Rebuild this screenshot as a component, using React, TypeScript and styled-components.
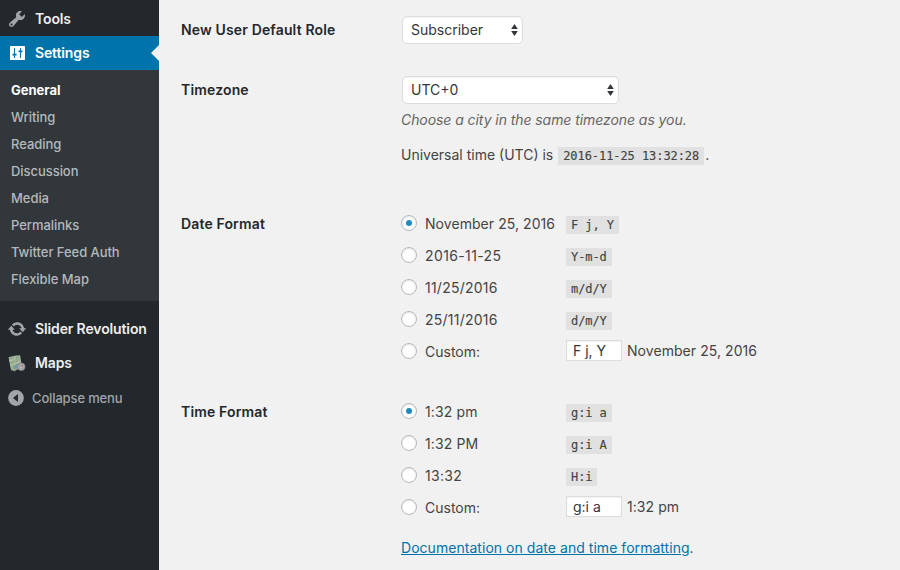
import React from "react";
import styled, { createGlobalStyle, css } from "styled-components";

const GlobalStyle = createGlobalStyle`
  *, *::before, *::after { box-sizing: border-box; }
  body {
    margin: 0;
    background: #f1f1f1;
    color: #444;
    font: 400 14px/20px Inter, "Liberation Sans", sans-serif;
    overflow: hidden;
  }
`;

const Page = styled.div`
  display: flex;
  height: 570px;
`;

/* Sidebar */

const Sidebar = styled.nav`
  flex: none;
  width: 159px;
  padding-top: 2px;
  background: #23282d;
`;

const MenuItem = styled.a<{ $current?: boolean }>`
  position: relative;
  display: flex;
  align-items: center;
  gap: 8px;
  height: 34px;
  padding-left: 7px;
  color: ${(p) => (p.$current ? "#fff" : "#eee")};
  background: ${(p) => (p.$current ? "#0073aa" : "transparent")};
  font-weight: 600;
  letter-spacing: -0.13px;
  white-space: nowrap;

  ${(p) =>
    p.$current &&
    css`
      &::after {
        content: "";
        position: absolute;
        right: 0;
        top: 9px;
        border: 8px solid transparent;
        border-left-width: 0;
        border-right-color: #f1f1f1;
      }
    `}
`;

const MenuIcon = styled.svg`
  flex: none;
  width: 20px;
  height: 20px;
`;

const Submenu = styled.div`
  display: flex;
  flex-direction: column;
  height: 231px;
  margin-bottom: 11px;
  padding: 7px 0 8px 11px;
  background: #32373c;
`;

const SubmenuItem = styled.a<{ $current?: boolean }>`
  height: 27px;
  line-height: 27px;
  font-size: 13px;
  font-weight: ${(p) => (p.$current ? 700 : 500)};
  letter-spacing: ${(p) => (p.$current ? 0 : -0.05)}px;
  color: ${(p) => (p.$current ? "#fff" : "#b4b9be")};
`;

const Collapse = styled.a`
  display: flex;
  align-items: center;
  gap: 6px;
  height: 34px;
  margin-top: 1px;
  padding-left: 6px;
  font-size: 13px;
  font-weight: 500;
  letter-spacing: -0.14px;
  color: #a0a5aa;
`;

/* Settings form */

const Form = styled.main`
  flex: 1;
  padding-left: 22px;
`;

const Row = styled.section<{ $height: number; $top?: number }>`
  display: grid;
  grid-template-columns: 220px 1fr;
  height: ${(p) => p.$height}px;
  padding-top: ${(p) => p.$top ?? 0}px;
`;

const RowLabel = styled.h2<{ $line: number }>`
  margin: 0;
  color: #23282d;
  font-size: 14px;
  line-height: ${(p) => p.$line}px;
  font-weight: 600;
  letter-spacing: 0.15px;
`;

const Field = styled.div`
  display: flex;
  flex-direction: column;
  align-items: flex-start;
`;

const SelectBox = styled.div<{ $width: number }>`
  display: flex;
  align-items: center;
  justify-content: space-between;
  width: ${(p) => p.$width}px;
  height: 28px;
  margin-left: 1px;
  padding: 0 4px 0 8px;
  border: 1px solid #ddd;
  border-radius: 5px;
  background: #fff;
  box-shadow: inset 0 1px 2px rgba(0, 0, 0, 0.05);
  color: #32373c;
`;

const Arrows = styled.svg`
  width: 7px;
  height: 14px;
  fill: #32373c;
`;

const Description = styled.p`
  margin: 6px 0 15px;
  color: #666;
  font-style: italic;
  letter-spacing: -0.07px;
`;

const Line = styled.p`
  display: flex;
  align-items: center;
  margin: 0;
`;

const Code = styled.code`
  height: 18px;
  padding: 0 5px;
  background: #e1e1e1;
  font: 12px/18px "DejaVu Sans Mono", monospace;
  letter-spacing: -0.07px;
  -webkit-text-stroke: 0.15px currentColor;
  white-space: pre;
`;

const UtcCode = styled(Code)`
  margin: 2px 1px 0 5px;
`;

const Option = styled.label`
  display: grid;
  grid-template-columns: 24px 141px auto auto;
  align-items: center;
  height: 32px;
`;

const OptionText = styled.span<{ $track?: number }>`
  letter-spacing: ${(p) => p.$track ?? 0}px;
`;

const OptionCode = styled(Code)`
  margin-top: 2px;
`;

const Radio = styled.span<{ $checked?: boolean }>`
  display: grid;
  place-items: center;
  width: 16px;
  height: 16px;
  margin-top: -2px;
  border: 1px solid #b4b9be;
  border-radius: 50%;
  background: #fff;
  box-shadow: inset 0 1px 2px rgba(0, 0, 0, 0.1);

  &::before {
    content: "";
    width: 6px;
    height: 6px;
    border-radius: 50%;
    background: ${(p) => (p.$checked ? "#1e8cbe" : "transparent")};
  }
`;

const TextInput = styled.span`
  width: 56px;
  height: 21px;
  margin: -3px 5px 0 0;
  padding-left: 6px;
  border: 1px solid #ddd;
  background: #fff;
  box-shadow: inset 0 1px 2px rgba(0, 0, 0, 0.07);
  color: #32373c;
  line-height: 20px;
`;

const Example = styled.span`
  margin-top: -2px;
  letter-spacing: 0.06px;
`;

const DocLine = styled.p`
  margin: 14px 0 0;
  letter-spacing: 0.04px;
`;

const DocLink = styled.a`
  color: #0073aa;
  text-decoration: underline;
`;

function ToolsIcon() {
  return (
    <MenuIcon viewBox="0 0 20 20" fill="#a0a5aa">
      <path d="M16.68 9.77c-1.34 1.34-3.3 1.67-4.95.99l-5.41 6.52c-.99.99-2.59.99-3.58 0s-.99-2.59 0-3.57l6.52-5.42c-.68-1.65-.35-3.61.99-4.95 1.28-1.28 3.12-1.62 4.72-1.06l-2.89 2.89 2.82 2.82 2.86-2.87c.53 1.58.18 3.39-1.08 4.65zM3.81 16.21c.4.39 1.04.39 1.43 0 .4-.4.4-1.04 0-1.43-.39-.4-1.03-.4-1.43 0-.39.39-.39 1.03 0 1.43z" />
    </MenuIcon>
  );
}

function SettingsIcon() {
  return (
    <MenuIcon viewBox="0 0 20 20">
      <rect x="3" y="3" width="15" height="14" rx="0.6" fill="#fff" />
      <g stroke="#0073aa" strokeLinecap="round" fill="none">
        <path d="M7.500 5.600v8.800M13.500 5.600v8.800" strokeWidth="1.100" />
        <path d="M6.200 11.700h2.600M12.200 8.300h2.600" strokeWidth="1.800" />
      </g>
    </MenuIcon>
  );
}

function UpdateIcon() {
  return (
    <MenuIcon viewBox="0 0 20 20" fill="#a0a5aa">
      <path d="M10.2 3.28c3.53 0 6.43 2.61 6.92 6h2.08l-3.5 4-3.5-4h2.32c-.45-1.97-2.21-3.45-4.32-3.45-1.45 0-2.73.71-3.54 1.78L4.95 5.66C6.23 4.2 8.11 3.28 10.2 3.28zm-.4 13.44c-3.52 0-6.43-2.61-6.92-6H.8l3.5-4c1.17 1.33 2.33 2.67 3.5 4H5.48c.45 1.97 2.21 3.45 4.32 3.45 1.45 0 2.73-.71 3.54-1.78l1.71 1.95c-1.28 1.46-3.15 2.38-5.25 2.38z" />
    </MenuIcon>
  );
}

function MapsIcon() {
  return (
    <MenuIcon viewBox="0 0 20 20">
      <path d="M1.500 4.200 5 3.300l4-.900 4.200-.200 1.800 12.500-4.300 1.500-3.200 2-3.500-1.200z" fill="#9aae93" />
      <path d="m5 3.300 2.500 14.900M9 2.400l2.200 13.800" stroke="#82957d" strokeWidth="0.600" />
      <path d="m2 8 5-1.500 2-3M3 13l4-2 6-2.500" stroke="#bdc8a6" strokeWidth="1" fill="none" />
      <path d="m7 13 3-2 2.500 1-2 3-3 1z" fill="#7499a5" />
      <circle cx="14.300" cy="13.800" r="3.700" fill="#a5a6a8" stroke="#85898c" strokeWidth="0.800" />
      <path d="m12.900 15.800 1-2.500 2.100-2-.8 2.700z" fill="#d3d4d5" />
      <path d="m13.900 13.300 2.100-2-.8 2.700z" fill="#ad5553" />
    </MenuIcon>
  );
}

function CollapseIcon() {
  return (
    <MenuIcon viewBox="0 0 20 20">
      <circle cx="10" cy="10" r="7.900" fill="#a0a5aa" />
      <path d="M12 6v8l-5-4z" fill="#23282d" />
    </MenuIcon>
  );
}

function Select({ width, value }: { width: number; value: string }) {
  return (
    <SelectBox $width={width}>
      {value}
      <Arrows viewBox="0 0 7 14">
        <path d="M0.200 6 3.500 1l3.300 5zM0.200 8h6.600L3.500 13z" />
      </Arrows>
    </SelectBox>
  );
}

type Format = { text: string; code: string; track?: number };

function FormatOptions({ formats, custom, example }: { formats: Format[]; custom: string; example: string }) {
  return (
    <>
      {formats.map((f, i) => (
        <Option key={f.code}>
          <Radio $checked={i === 0} />
          <OptionText $track={f.track}>{f.text}</OptionText>
          <OptionCode>{f.code}</OptionCode>
        </Option>
      ))}
      <Option>
        <Radio />
        <OptionText>Custom:</OptionText>
        <TextInput>{custom}</TextInput>
        <Example>{example}</Example>
      </Option>
    </>
  );
}

const submenu = ["General", "Writing", "Reading", "Discussion", "Media", "Permalinks", "Twitter Feed Auth", "Flexible Map"];

const dateFormats: Format[] = [
  { text: "November 25, 2016", code: "F j, Y", track: 0.06 },
  { text: "2016-11-25", code: "Y-m-d", track: 0.38 },
  { text: "11/25/2016", code: "m/d/Y", track: 0.24 },
  { text: "25/11/2016", code: "d/m/Y", track: 0.24 },
];

const timeFormats: Format[] = [
  { text: "1:32 pm", code: "g:i a", track: 0.12 },
  { text: "1:32 PM", code: "g:i A", track: 0.12 },
  { text: "13:32", code: "H:i", track: 0.3 },
];

export default function App() {
  return (
    <>
      <GlobalStyle />
      <Page>
        <Sidebar>
          <MenuItem><ToolsIcon />Tools</MenuItem>
          <MenuItem $current><SettingsIcon />Settings</MenuItem>
          <Submenu>
            {submenu.map((name, i) => (
              <SubmenuItem key={name} $current={i === 0}>{name}</SubmenuItem>
            ))}
          </Submenu>
          <MenuItem><UpdateIcon />Slider Revolution</MenuItem>
          <MenuItem><MapsIcon />Maps</MenuItem>
          <Collapse><CollapseIcon />Collapse menu</Collapse>
        </Sidebar>
        <Form>
          <Row $height={60} $top={16}>
            <RowLabel $line={28}>New User Default Role</RowLabel>
            <Field><Select width={121} value="Subscriber" /></Field>
          </Row>
          <Row $height={148} $top={16}>
            <RowLabel $line={28}>Timezone</RowLabel>
            <Field>
              <Select width={217} value="UTC+0" />
              <Description>Choose a city in the same timezone as you.</Description>
              <Line>Universal time (UTC) is <UtcCode>2016-11-25 13:32:28</UtcCode>.</Line>
            </Field>
          </Row>
          <Row $height={188}>
            <RowLabel $line={32}>Date Format</RowLabel>
            <Field>
              <FormatOptions formats={dateFormats} custom="F j, Y" example="November 25, 2016" />
            </Field>
          </Row>
          <Row $height={174}>
            <RowLabel $line={32}>Time Format</RowLabel>
            <Field>
              <FormatOptions formats={timeFormats} custom="g:i a" example="1:32 pm" />
              <DocLine><DocLink>Documentation on date and time formatting</DocLink>.</DocLine>
            </Field>
          </Row>
        </Form>
      </Page>
    </>
  );
}
